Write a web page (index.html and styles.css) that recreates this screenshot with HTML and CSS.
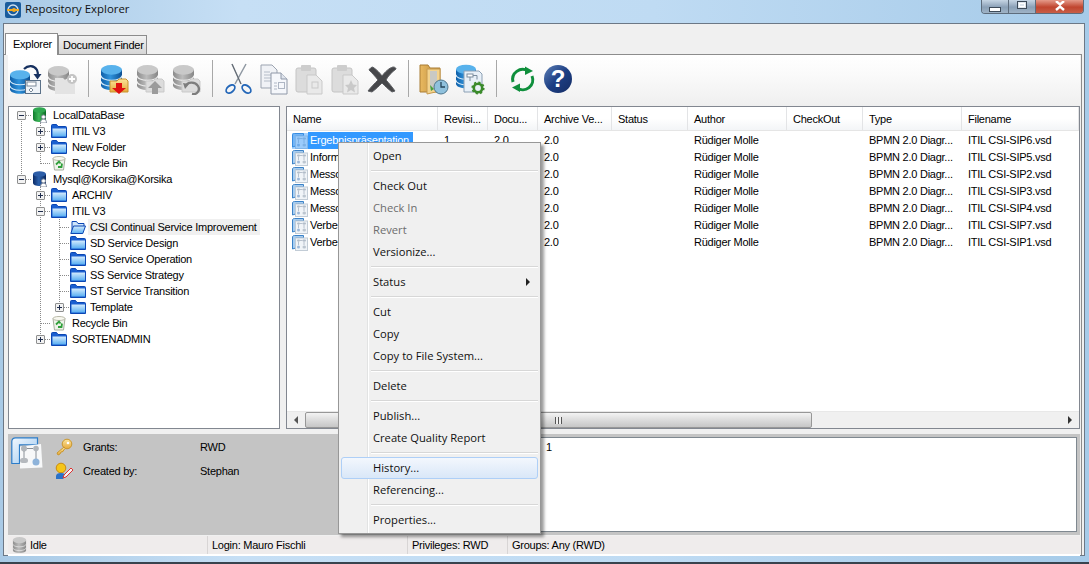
FILE: index.html
```html
<!DOCTYPE html>
<html lang="en">
<head>
<meta charset="utf-8">
<title>Repository Explorer</title>
<link rel="stylesheet" href="styles.css">
</head>
<body>
<svg class="defs" width="0" height="0" aria-hidden="true">
  <defs>
    <linearGradient id="gBlue" x1="0" x2="1" y1="0" y2="0"><stop offset="0" stop-color="#0f5fa8"/><stop offset=".45" stop-color="#2f93dc"/><stop offset="1" stop-color="#0c4f92"/></linearGradient>
    <linearGradient id="gGray" x1="0" x2="1" y1="0" y2="0"><stop offset="0" stop-color="#8b8b8b"/><stop offset=".45" stop-color="#bcbcbc"/><stop offset="1" stop-color="#868686"/></linearGradient>
    <linearGradient id="gGreen" x1="0" x2="1" y1="0" y2="0"><stop offset="0" stop-color="#0e7a2c"/><stop offset=".45" stop-color="#3fb75a"/><stop offset="1" stop-color="#0b6a26"/></linearGradient>
    <linearGradient id="gNavy" x1="0" x2="1" y1="0" y2="0"><stop offset="0" stop-color="#0b2a66"/><stop offset=".45" stop-color="#2c62ad"/><stop offset="1" stop-color="#0a255a"/></linearGradient>
    <linearGradient id="gFold" x1="0" x2="0" y1="0" y2="1"><stop offset="0" stop-color="#d5ecfd"/><stop offset="1" stop-color="#58aef2"/></linearGradient>
    <linearGradient id="gYel" x1="0" x2="0" y1="0" y2="1"><stop offset="0" stop-color="#fbe49a"/><stop offset="1" stop-color="#e6a93a"/></linearGradient>
    <linearGradient id="gTan" x1="0" x2="1" y1="0" y2="0"><stop offset="0" stop-color="#e9b960"/><stop offset="1" stop-color="#b98a3c"/></linearGradient>
    <linearGradient id="gHelp" x1="0" x2="1" y1="0" y2="1"><stop offset="0" stop-color="#5d7fb5"/><stop offset=".5" stop-color="#1d3f84"/><stop offset="1" stop-color="#142c63"/></linearGradient>
    <linearGradient id="gTab" x1="0" x2="1" y1="0" y2="1"><stop offset="0" stop-color="#f2f8fe"/><stop offset="1" stop-color="#9cc7ee"/></linearGradient>

    <symbol id="dbBlue" viewBox="0 0 22 26"><path d="M0 5v16c0 3 5 5 11 5s11-2 11-5V5z" fill="url(#gBlue)"/><ellipse cx="11" cy="5" rx="11" ry="5" fill="#58b2ec"/><path d="M0 11c0 3 5 5 11 5s11-2 11-5M0 17c0 3 5 5 11 5s11-2 11-5" fill="none" stroke="#d3e9f9" stroke-width="1.2"/></symbol>
    <symbol id="dbGray" viewBox="0 0 22 26"><path d="M0 5v16c0 3 5 5 11 5s11-2 11-5V5z" fill="url(#gGray)"/><ellipse cx="11" cy="5" rx="11" ry="5" fill="#c9c9c9"/><path d="M0 11c0 3 5 5 11 5s11-2 11-5M0 17c0 3 5 5 11 5s11-2 11-5" fill="none" stroke="#ececec" stroke-width="1.2"/></symbol>

    <symbol id="tFolder" viewBox="0 0 16 16"><path d="M.5 14.500V2.500c0-.6.4-1 1-1h4l1.500 2h7.500c.6 0 1 .4 1 1v10z" fill="#1a5fd0" stroke="#0b46b4"/><path d="M1.500 13.500V5.500h13.500v8z" fill="url(#gFold)"/></symbol>
    <symbol id="tOpen" viewBox="0 0 16 16"><path d="M2 14V2.500h4.500l1.500 2h6V7" fill="#cfe6fb" stroke="#0b46b4"/><path d="M.8 14.500 3.500 7h12l-2.700 7.500z" fill="url(#gFold)" stroke="#0b46b4"/></symbol>
    <symbol id="tBin" viewBox="0 0 16 16"><path d="M2 3.500h12L12.500 15h-9z" fill="#eef3ea" stroke="#a6ad9e"/><ellipse cx="8" cy="3.500" rx="6" ry="2" fill="#f8f8f0" stroke="#b9b9a8"/><path d="M5 9.500 8 6.500l1.500 2M11 8.500l-.5 3.500H7" fill="none" stroke="#2f9f3a" stroke-width="1.800"/></symbol>
    <symbol id="tGreen" viewBox="0 0 16 16"><path d="M1 3v9c0 1.700 3 3 6.500 3s6.500-1.300 6.500-3V3z" fill="url(#gGreen)"/><ellipse cx="7.500" cy="3" rx="6.500" ry="2.800" fill="#2fa850"/><circle cx="11.500" cy="10" r="2" fill="#fff" stroke="#8a93a3"/><path d="M8.500 16c0-3 1.300-3.800 3-3.800s3 .8 3 3.800z" fill="#fff" stroke="#8a93a3"/></symbol>
    <symbol id="tNavy" viewBox="0 0 16 16"><path d="M1 3v9c0 1.700 3 3 6.500 3s6.500-1.300 6.500-3V3z" fill="url(#gNavy)"/><ellipse cx="7.500" cy="3" rx="6.500" ry="2.800" fill="#2d5ea8"/><circle cx="11.500" cy="10" r="2" fill="#fff" stroke="#8a93a3"/><path d="M8.500 16c0-3 1.300-3.800 3-3.800s3 .8 3 3.800z" fill="#fff" stroke="#8a93a3"/></symbol>
    <symbol id="tDoc" viewBox="0 0 16 16"><path d="M.5 14V2C.5 1 1.500.5 2.500.5h9V3h-8v10z" fill="#a8cdf0" stroke="#3b82c8"/><rect x="3.500" y="3" width="12" height="12.500" fill="#f0f4f8" stroke="#c2ccd6"/><rect x="5" y="4.500" width="3" height="2" rx="1" fill="#b2bdc9"/><rect x="10.500" y="4.500" width="3.500" height="2" rx="1" fill="#b2bdc9"/><path d="M8 5.500h2.500M6.500 6.500v3.500M12 6.500v3.500" stroke="#a8b4c2" stroke-width=".8"/><rect x="5" y="10.500" width="3" height="3" rx="1.500" fill="#9db8d8"/><rect x="10.500" y="10.500" width="3.500" height="3" rx="1.500" fill="#bcc6d0"/></symbol>
  </defs>
</svg>

<header class="titlebar">
  <svg class="app-icon" width="16" height="16" viewBox="0 0 16 16"><rect width="16" height="16" rx="2" fill="#1a5c9c"/><circle cx="8" cy="8" r="5" fill="none" stroke="#cfe2f2" stroke-width="1.300"/><path d="M2 8h12" stroke="#f2a91e" stroke-width="2"/><circle cx="9" cy="8" r="2" fill="#f2a91e"/></svg>
  <span class="title">Repository Explorer</span>
  <div class="controls">
    <span class="ctl ctl-min"><i></i></span>
    <span class="ctl ctl-max"><i></i></span>
    <span class="ctl ctl-close"><svg width="14" height="11" viewBox="0 0 14 11"><path d="M3 0 7 3.500 11 0M3 9 7 5.500 11 9" fill="none" stroke="#fff" stroke-width="2.400"/></svg></span>
  </div>
</header>

<div class="window">
  <div class="tabs">
    <span class="tab active">Explorer</span>
    <span class="tab">Document Finder</span>
  </div>
  <main class="page">
    <div class="toolbar">
      <span class="tb"><svg width="32" height="32" viewBox="0 0 32 32"><use href="#dbBlue" x="0" y="7" width="20" height="24"/><path d="M14 6c4-4 10-4 13 1 1 2 1 4 .5 6" fill="none" stroke="#16305f" stroke-width="2.200"/><path d="M23.500 11h8l-4 5.500z" fill="#16305f"/><rect x="15.500" y="17.500" width="15" height="13" fill="#eef3f8" stroke="#5b7188"/><rect x="17" y="19" width="9" height="4" fill="#fff" stroke="#7a8a9a"/><path d="M21 25l2 2-2 2-2-2z" fill="#fff" stroke="#7a8a9a"/></svg></span>
      <span class="tb"><svg width="32" height="32" viewBox="0 0 32 32"><use href="#dbGray" x="2" y="3" width="21" height="25"/><path d="M9 15h8l2 2h10v14H9z" fill="#e3e3e3"/><circle cx="26" cy="16" r="5" fill="#c4c4c4"/><path d="M26 13v6M23 16h6" stroke="#fff" stroke-width="1.800"/></svg></span>
      <span class="sep"></span>
      <span class="tb"><svg width="32" height="32" viewBox="0 0 32 32"><use href="#dbBlue" x="3" y="2" width="21" height="25"/><path d="M12 18h7l2-2h7l2 2v11H12z" fill="url(#gYel)" stroke="#c9922e"/><path d="M18 20h6v5h4l-7 6-7-6h4z" fill="#e01010"/></svg></span>
      <span class="tb"><svg width="32" height="32" viewBox="0 0 32 32"><use href="#dbGray" x="3" y="2" width="21" height="25"/><path d="M12 18h7l2-2h7l2 2v11H12z" fill="#dcdcdc" stroke="#c9c9c9"/><path d="M18 31v-6h-4l7-7 7 7h-4v6z" fill="#9b9b9b"/></svg></span>
      <span class="tb"><svg width="32" height="32" viewBox="0 0 32 32"><use href="#dbGray" x="3" y="2" width="21" height="25"/><path d="M12 18h7l2-2h7l2 2v11H12z" fill="#dcdcdc" stroke="#c9c9c9"/><path d="M16 23c1-4 9-5 12 0s-2 9-6 8" fill="none" stroke="#7d7d7d" stroke-width="2.400"/><path d="M13 20l6 1-4 5z" fill="#7d7d7d"/></svg></span>
      <span class="sep"></span>
      <span class="tb"><svg width="32" height="32" viewBox="0 0 32 32"><path d="M10 1l9 20M24 1l-11 20" fill="none" stroke="#8f98a2" stroke-width="1.500"/><path d="M10 1l9 20" stroke="#4a5058" stroke-width=".7"/><ellipse cx="8.500" cy="26" rx="5" ry="3.200" fill="none" stroke="#2467b8" stroke-width="1.800" transform="rotate(-40 8.500 26)"/><ellipse cx="24.500" cy="26" rx="5" ry="3.200" fill="none" stroke="#2467b8" stroke-width="1.800" transform="rotate(40 24.500 26)"/></svg></span>
      <span class="tb"><svg width="32" height="32" viewBox="0 0 32 32"><path d="M3 2h11l5 5v18H3z" fill="#f0f2f6" stroke="#9ba3b0"/><path d="M6 9h6M6 12h9M6 15h9M6 18h9" stroke="#b4bcc8"/><path d="M13 10h10l6 6v15H13z" fill="#f5f7fb" stroke="#8f98a8"/><path d="M23 10v6h6" fill="#dfe4ec" stroke="#8f98a8"/><path d="M16 20h3M16 23h3M16 26h3" stroke="#aeb6c4"/><rect x="20.500" y="19.500" width="6" height="6" fill="none" stroke="#aeb6c4"/></svg></span>
      <span class="tb"><svg width="32" height="32" viewBox="0 0 32 32"><rect x="2" y="5" width="20" height="24" rx="2" fill="#dcdcdc" stroke="#c4c4c4"/><rect x="7" y="2" width="10" height="6" rx="1" fill="#cdcdcd"/><path d="M13 12h9l6 6v13H13z" fill="#e9e9e9" stroke="#c9c9c9"/><rect x="18" y="19" width="6" height="6" fill="none" stroke="#c9c9c9"/></svg></span>
      <span class="tb"><svg width="32" height="32" viewBox="0 0 32 32"><rect x="2" y="5" width="20" height="24" rx="2" fill="#dcdcdc" stroke="#c4c4c4"/><rect x="7" y="2" width="10" height="6" rx="1" fill="#cdcdcd"/><path d="M13 12h9l6 6v13H13z" fill="#e9e9e9" stroke="#c9c9c9"/><path d="M21 17l2 4.500 4 .5-3 3 1 4.500-4-2.500-4 2.500 1-4.500-3-3 4-.5z" fill="#c9c9c9"/></svg></span>
      <span class="tb"><svg width="32" height="32" viewBox="0 0 32 32"><path d="M3 6.500 6 4c2 0 8 6 10 9 3-4 7-8 11-9 2 0 3 1 3 2-4 3-8 7-10 11 3 3 6 7 9 11l-3 1c-4-3-7-6-10-9-3 3-6 6-10 9l-4-1c3-4 7-8 10-11-3-4-6-7-9-10z" fill="#46474a" stroke="#5c5e62" stroke-linejoin="round"/></svg></span>
      <span class="sep"></span>
      <span class="tb"><svg width="32" height="32" viewBox="0 0 32 32"><path d="M2 2h8l2 3h10v24H2z" fill="url(#gTan)" stroke="#a97d35"/><path d="M9 6l13 0v22l-13 3z" fill="#f3d38e" stroke="#c69a4e"/><path d="M12 8h7v19h-7z" fill="#c9c9c4"/><circle cx="23" cy="24" r="7" fill="#8fc1dd" stroke="#50788f"/><path d="M23 19v5h4" fill="none" stroke="#26465a" stroke-width="1.300"/><path d="M12 22l4 4-3 2z" fill="#4aa03a"/></svg></span>
      <span class="tb"><svg width="32" height="32" viewBox="0 0 32 32"><use href="#dbBlue" x="2" y="1" width="20" height="25"/><path d="M10 8h15l3 3v18H10z" fill="#e8f0f8" stroke="#8ca0b4"/><rect x="13" y="11" width="6" height="3" fill="#fff" stroke="#7b8c9e"/><path d="M19 12.500h4v4M16 14v4" fill="none" stroke="#7b8c9e"/><circle cx="24" cy="25" r="4.200" fill="none" stroke="#3a8a2a" stroke-width="2.600"/><circle cx="24" cy="25" r="5.800" fill="none" stroke="#3a8a2a" stroke-width="1.600" stroke-dasharray="2.200 2.300"/></svg></span>
      <span class="sep"></span>
      <span class="tb"><svg width="32" height="32" viewBox="0 0 32 32"><path d="M7 19a10 10 0 0 1 15-11" fill="none" stroke="#0f8f3c" stroke-width="3"/><path d="M19 3.500 27 8l-8 4z" fill="#0f8f3c"/><path d="M26 13a10 10 0 0 1-15 12" fill="none" stroke="#0f8f3c" stroke-width="3"/><path d="M14 29 6 24.500l8-4z" fill="#0f8f3c"/></svg></span>
      <span class="tb"><svg width="32" height="32" viewBox="0 0 32 32"><circle cx="16" cy="16" r="14" fill="url(#gHelp)"/><text class="qmark" x="16" y="24" text-anchor="middle">?</text></svg></span>
    </div>

    <div class="split">
      <nav class="tree">
        <div class="row"><span class="c root-first"><i class="box minus"></i></span><svg class="ti"><use href="#tGreen"/></svg><span class="tl">LocalDataBase</span></div>
        <div class="row"><span class="g"></span><span class="c"><i class="box plus"></i></span><svg class="ti"><use href="#tFolder"/></svg><span class="tl">ITIL V3</span></div>
        <div class="row"><span class="g"></span><span class="c"><i class="box plus"></i></span><svg class="ti"><use href="#tFolder"/></svg><span class="tl">New Folder</span></div>
        <div class="row"><span class="g"></span><span class="c last"></span><svg class="ti"><use href="#tBin"/></svg><span class="tl">Recycle Bin</span></div>
        <div class="row"><span class="c last"><i class="box minus"></i></span><svg class="ti"><use href="#tNavy"/></svg><span class="tl">Mysql@Korsika@Korsika</span></div>
        <div class="row"><span class="e"></span><span class="c"><i class="box plus"></i></span><svg class="ti"><use href="#tFolder"/></svg><span class="tl">ARCHIV</span></div>
        <div class="row"><span class="e"></span><span class="c"><i class="box minus"></i></span><svg class="ti"><use href="#tFolder"/></svg><span class="tl">ITIL V3</span></div>
        <div class="row l2"><span class="e"></span><span class="g"></span><span class="c"></span><svg class="ti"><use href="#tOpen"/></svg><span class="tl current">CSI Continual Service Improvement</span></div>
        <div class="row l2"><span class="e"></span><span class="g"></span><span class="c"></span><svg class="ti"><use href="#tFolder"/></svg><span class="tl">SD Service Design</span></div>
        <div class="row l2"><span class="e"></span><span class="g"></span><span class="c"></span><svg class="ti"><use href="#tFolder"/></svg><span class="tl">SO Service Operation</span></div>
        <div class="row l2"><span class="e"></span><span class="g"></span><span class="c"></span><svg class="ti"><use href="#tFolder"/></svg><span class="tl">SS Service Strategy</span></div>
        <div class="row l2"><span class="e"></span><span class="g"></span><span class="c"></span><svg class="ti"><use href="#tFolder"/></svg><span class="tl">ST Service Transition</span></div>
        <div class="row l2"><span class="e"></span><span class="g"></span><span class="c last"><i class="box plus"></i></span><svg class="ti"><use href="#tFolder"/></svg><span class="tl">Template</span></div>
        <div class="row"><span class="e"></span><span class="c"></span><svg class="ti"><use href="#tBin"/></svg><span class="tl">Recycle Bin</span></div>
        <div class="row"><span class="e"></span><span class="c last"><i class="box plus"></i></span><svg class="ti"><use href="#tFolder"/></svg><span class="tl">SORTENADMIN</span></div>
      </nav>

      <section class="list">
        <div class="grid head">
          <span>Name</span><span>Revisi...</span><span>Docu...</span><span>Archive Ve...</span><span>Status</span><span>Author</span><span>CheckOut</span><span>Type</span><span>Filename</span>
        </div>
        <div class="rows">
          <div class="grid item"><span class="nm"><svg class="di" viewBox="0 0 16 16"><use href="#tDoc"/><rect class="tint" width="16" height="16"/></svg><b class="sel">Ergebnispräsentation</b></span><span>1</span><span>2.0</span><span>2.0</span><span></span><span>Rüdiger Molle</span><span></span><span>BPMN 2.0 Diagr...</span><span>ITIL CSI-SIP6.vsd</span></div>
          <div class="grid item"><span class="nm"><svg class="di"><use href="#tDoc"/></svg><b>Inform</b></span><span>1</span><span>2.0</span><span>2.0</span><span></span><span>Rüdiger Molle</span><span></span><span>BPMN 2.0 Diagr...</span><span>ITIL CSI-SIP5.vsd</span></div>
          <div class="grid item"><span class="nm"><svg class="di"><use href="#tDoc"/></svg><b>Messo</b></span><span>1</span><span>2.0</span><span>2.0</span><span></span><span>Rüdiger Molle</span><span></span><span>BPMN 2.0 Diagr...</span><span>ITIL CSI-SIP2.vsd</span></div>
          <div class="grid item"><span class="nm"><svg class="di"><use href="#tDoc"/></svg><b>Messo</b></span><span>1</span><span>2.0</span><span>2.0</span><span></span><span>Rüdiger Molle</span><span></span><span>BPMN 2.0 Diagr...</span><span>ITIL CSI-SIP3.vsd</span></div>
          <div class="grid item"><span class="nm"><svg class="di"><use href="#tDoc"/></svg><b>Messo</b></span><span>1</span><span>2.0</span><span>2.0</span><span></span><span>Rüdiger Molle</span><span></span><span>BPMN 2.0 Diagr...</span><span>ITIL CSI-SIP4.vsd</span></div>
          <div class="grid item"><span class="nm"><svg class="di"><use href="#tDoc"/></svg><b>Verbe</b></span><span>1</span><span>2.0</span><span>2.0</span><span></span><span>Rüdiger Molle</span><span></span><span>BPMN 2.0 Diagr...</span><span>ITIL CSI-SIP7.vsd</span></div>
          <div class="grid item"><span class="nm"><svg class="di"><use href="#tDoc"/></svg><b>Verbe</b></span><span>1</span><span>2.0</span><span>2.0</span><span></span><span>Rüdiger Molle</span><span></span><span>BPMN 2.0 Diagr...</span><span>ITIL CSI-SIP1.vsd</span></div>
        </div>
        <div class="hscroll">
          <span class="arrow"><i class="tri-l"></i></span>
          <span class="thumb"><i class="grip"></i></span>
          <span class="track"></span>
          <span class="arrow"><i class="tri-r"></i></span>
        </div>
      </section>
    </div>

    <div class="details">
      <div class="info">
        <svg class="thumbicon" width="32" height="32" viewBox="0 0 32 32"><path d="M.8 26.500V4.500C.8 2 2.500.8 4.500.8h22v7H8.500v18.700z" fill="url(#gTab)" stroke="#2c7cc8" stroke-width="1.200"/><path d="M9 9.500 30 7l1.500 23.500-22.500 1z" fill="#f7f8f9"/><circle cx="13" cy="11.500" r="3" fill="#b0b5ba"/><circle cx="25" cy="11.500" r="2.800" fill="#b0b5ba"/><path d="M16 11.500h6M13 14v7M25 14v8" stroke="#8a9097"/><rect x="9" y="21" width="8" height="5" rx="2.500" fill="#b5b9be"/><circle cx="25" cy="25" r="3.500" fill="#8eb3da"/></svg>
        <div class="props">
          <div class="prop"><svg class="pi" width="18" height="18" viewBox="0 0 18 18"><circle cx="12" cy="6" r="4.800" fill="url(#gYel)" stroke="#c9962e"/><circle cx="13" cy="5" r="1.300" fill="#fff"/><path d="M9 9 2 15l1 2 2-1 1-2 2-.5 1-2 1.500-1z" fill="url(#gYel)" stroke="#c9962e" stroke-linejoin="round"/></svg><span class="lab">Grants:</span><span>RWD</span></div>
          <div class="prop"><svg class="pi" width="18" height="18" viewBox="0 0 18 18"><circle cx="6" cy="6" r="4.800" fill="#f5c518" stroke="#c98a10"/><path d="M1 17v-3c0-2 2-3 5-3s4 1 4 2l-2 4z" fill="#2b72c8"/><path d="M8 16l1-3 7-7 2 2-7 7z" fill="#f3f3f3" stroke="#d33"/></svg><span class="lab">Created by:</span><span>Stephan</span></div>
        </div>
      </div>
      <div class="notes">1</div>
    </div>

    <footer class="status">
      <span class="cell c-idle"><svg width="15" height="16" viewBox="0 0 22 26"><use href="#dbGray"/></svg>Idle</span>
      <span class="cell c-login">Login: Mauro Fischli</span>
      <span class="cell c-priv">Privileges: RWD</span>
      <span class="cell c-grp">Groups: Any (RWD)</span>
    </footer>
  </main>
</div>

<div class="menu" role="menu">
  <div class="mi">Open</div>
  <div class="ms"></div>
  <div class="mi">Check Out</div>
  <div class="mi off">Check In</div>
  <div class="mi off">Revert</div>
  <div class="mi">Versionize...</div>
  <div class="ms"></div>
  <div class="mi sub">Status<i class="tri-r dark"></i></div>
  <div class="ms"></div>
  <div class="mi">Cut</div>
  <div class="mi">Copy</div>
  <div class="mi">Copy to File System...</div>
  <div class="ms"></div>
  <div class="mi">Delete</div>
  <div class="ms"></div>
  <div class="mi">Publish...</div>
  <div class="mi">Create Quality Report</div>
  <div class="ms"></div>
  <div class="mi hot">History...</div>
  <div class="mi">Referencing...</div>
  <div class="ms"></div>
  <div class="mi">Properties...</div>
</div>
</body>
</html>
```
FILE: styles.css
```css
* { box-sizing: border-box; }
html, body { margin: 0; height: 564px; overflow: hidden; }
body {
  width: 1089px;
  position: relative;
  font: 11px/16px "Liberation Sans", Arial, sans-serif;
  letter-spacing: -.25px;
  color: #000;
  background: linear-gradient(90deg, #a9cae6, #c6dff5 22%, #bfdbf3 60%, #a6cbe9);
  border-bottom: 2px solid #39434e;
}
.defs { display: block; }

/* title bar */
.titlebar { height: 23px; display: flex; align-items: flex-start; padding: 1px 5px 0; }
.app-icon { margin-top: 1px; }
.title { font: 11.4px/16px "Open Sans", sans-serif; letter-spacing: 0; margin: 0 0 0 4px; color: #111; }
.controls { margin-left: auto; margin-top: -1px; display: flex; height: 14px; border: 1px solid #5d6c7c; border-top: 0; border-radius: 0 0 4px 4px; overflow: hidden; }
.ctl { display: flex; align-items: center; justify-content: center; background: linear-gradient(#c6d5e4, #8aa0b6 55%, #9fb3c6); border-right: 1px solid #5d6c7c; }
.ctl-min { width: 27px; }
.ctl-max { width: 27px; }
.ctl-close { width: 47px; border-right: 0; background: linear-gradient(#e59a8a, #c0452f 55%, #c85e47); }
.ctl-min i { display: block; width: 12px; height: 5px; background: #fff; border: 1px solid #3d4a58; margin-top: 6px; }
.ctl-max i { display: block; width: 10px; height: 8px; border: 1px solid #3d4a58; outline: 1px solid #fff; outline-offset: -3px; background: #dde6ee; margin-top: -4px; }

/* window */
.window { width: 1082px; height: 533px; margin-left: 3px; border: 1px solid #6c7886; background: #f0f0f0; display: flex; flex-direction: column; }
.tabs { height: 30px; display: flex; align-items: flex-end; padding-left: 1px; }
.tab { height: 19px; width: 89px; padding: 0 0 0 4px; line-height: 19px; border: 1px solid #8c8c8c; border-bottom: 0; background: linear-gradient(#f2f2f2, #d6d6d6); white-space: nowrap; }
.tab.active { height: 22px; width: 53px; padding-left: 7px; background: #fff; line-height: 21px; position: relative; z-index: 1; margin-bottom: -1px; }

.page { flex: 1; margin-right: 2px; border-top: 1px solid #8c8c8c; border-right: 1px solid #8c8c8c; padding: 0 1px 0 4px; display: flex; flex-direction: column; }

/* toolbar */
.toolbar { height: 51px; display: flex; align-items: center; padding-bottom: 4px; background: linear-gradient(#fff, #fafafa 40%, #efefef); }
.tb { width: 32px; height: 32px; margin: 0 2px; display: block; }
.tb svg { display: block; }
.sep { width: 1px; height: 37px; background: #a8a8a8; margin: 0 7px 0 8px; }
.qmark { font: bold 24px "Liberation Sans", sans-serif; fill: #fff; }

/* panels */
.split { height: 323px; display: flex; gap: 6px; }
.tree { width: 272px; background: #fff; border: 1px solid #828790; padding: 0 0 0 3px; }
.row { height: 16px; display: flex; align-items: center; white-space: nowrap; }
.g, .c, .e { width: 19px; height: 16px; flex: none; display: flex; align-items: center; justify-content: center; }
.g { background: repeating-linear-gradient(#8a8a8a 0 1px, transparent 1px 2px) 9px 0 / 1px 100% no-repeat; }
.c {
  background:
    repeating-linear-gradient(90deg, #8a8a8a 0 1px, transparent 1px 2px) 10px 8px / 9px 1px no-repeat,
    repeating-linear-gradient(#8a8a8a 0 1px, transparent 1px 2px) 9px 0 / 1px 100% no-repeat;
}
.c.last {
  background:
    repeating-linear-gradient(90deg, #8a8a8a 0 1px, transparent 1px 2px) 10px 8px / 9px 1px no-repeat,
    repeating-linear-gradient(#8a8a8a 0 1px, transparent 1px 2px) 9px 0 / 1px 9px no-repeat;
}
.c.root-first {
  background:
    repeating-linear-gradient(90deg, #8a8a8a 0 1px, transparent 1px 2px) 10px 8px / 9px 1px no-repeat,
    repeating-linear-gradient(#8a8a8a 0 1px, transparent 1px 2px) 9px 8px / 1px 8px no-repeat;
}
.box { display: block; width: 9px; height: 9px; border: 1px solid #8e8f8f; border-radius: 1px; background-color: #f2f2f2; background-repeat: no-repeat; }
.minus { background-image: linear-gradient(#1f2d4d, #1f2d4d); background-size: 5px 1px; background-position: center; }
.plus { background-image: linear-gradient(#1f2d4d, #1f2d4d), linear-gradient(#1f2d4d, #1f2d4d); background-size: 5px 1px, 1px 5px; background-position: center; }
.ti { width: 16px; height: 16px; margin-left: 1px; flex: none; }
.tl { margin-left: 5px; padding-right: 3px; }
.l2 .tl { margin-left: 4px; }
.l2 .current { background: #f0f0f0; margin-left: 2px; padding-left: 2px; }

/* list */
.list { flex: 1; min-width: 0; background: #fff; border: 1px solid #828790; display: flex; flex-direction: column; }
.grid { display: grid; grid-template-columns: 151px 50px 50px 74px 76px 99px 76px 99px 1fr; }
.grid > span { padding-left: 6px; white-space: nowrap; overflow: hidden; }
.head { height: 24px; line-height: 24px; background: linear-gradient(#fff 50%, #f3f5f7); border-bottom: 1px solid #e5e5e5; }
.head > span { border-right: 1px solid #e3e4e6; }
.rows { flex: 1; min-height: 0; padding-top: 1px; }
.item { height: 17px; line-height: 17px; }
.grid > .nm { padding-left: 5px; display: flex; align-items: center; }
.di { width: 16px; height: 16px; flex: none; }
.tint { fill: #3399ff; opacity: .45; }
.nm b { font-weight: 400; padding-left: 2px; flex: none; }
.nm .sel { background: #3399ff; color: #fff; padding: 0 4px 0 2px; }
.hscroll { height: 17px; display: flex; background: #f0f0f0; border-top: 1px solid #e8e8e8; }
.arrow { width: 18px; display: flex; align-items: center; justify-content: center; }
.tri-l, .tri-r { display: block; width: 0; height: 0; border: 4px solid transparent; }
.tri-l { border-right-color: #555; border-left-width: 0; }
.tri-r { border-left-color: #333; border-right-width: 0; }
.thumb { width: 507px; border: 1px solid #979797; border-radius: 2px; background: linear-gradient(#f3f3f3, #dcdcdc 50%, #c6c6c6); display: flex; align-items: center; justify-content: center; }
.grip { display: block; width: 7px; height: 7px; background: repeating-linear-gradient(90deg, #555 0 1px, #f0f0f0 1px 3px); }
.track { flex: 1; }

/* details */
.details { height: 101px; margin-top: 5px; background: #c4c4c4; display: flex; padding: 3px; }
.info { width: 499px; display: flex; }
.thumbicon { flex: none; }
.props { margin-left: 12px; margin-top: -2px; }
.prop { height: 24px; display: flex; align-items: center; }
.pi { flex: none; }
.lab { width: 117px; margin-left: 10px; }
.notes { flex: 1; background: #fff; border: 1px solid #7f8890; padding: 1px 0 0 35px; margin-right: 0; }

/* status */
.status { height: 18px; margin-top: 1px; background: #efecec; display: flex; line-height: 18px; box-shadow: 0 2px 0 #fff; }
.cell { padding-left: 4px; border-right: 1px solid #d8d5d5; white-space: nowrap; display: flex; align-items: center; }
.c-idle { width: 200px; gap: 3px; }
.c-login { width: 200px; }
.c-priv { width: 100px; }
.c-grp { flex: 1; border-right: 0; }

/* context menu */
.menu {
  position: absolute; left: 338px; top: 142px; width: 203px; height: 392px; padding: 2px;
  border: 1px solid #979797;
  background: linear-gradient(90deg, #f0f0f0 28px, #e2e3e3 28px, #e2e3e3 29px, #fff 29px, #fff 30px, #f0f0f0 30px);
  box-shadow: 3px 3px 3px rgba(0,0,0,.4);
  font: 11.2px/20px "Open Sans", sans-serif;
  letter-spacing: 0;
  color: #111;
}
.mi { height: 22px; padding-left: 31px; border: 1px solid transparent; border-radius: 3px; line-height: 20px; }
.mi.off { color: #6d6d6d; }
.mi.sub { display: flex; align-items: center; justify-content: space-between; padding-right: 7px; }
.tri-r.dark { border-left-color: #222; }
.mi.hot { background: linear-gradient(#f3f7fd, #d9e7f8); border-color: #aecff7; }
.ms { height: 8px; margin-left: 30px; background: linear-gradient(#d7d7d7, #d7d7d7) 0 3px / 100% 1px no-repeat, linear-gradient(#fff, #fff) 0 4px / 100% 1px no-repeat; }
```
